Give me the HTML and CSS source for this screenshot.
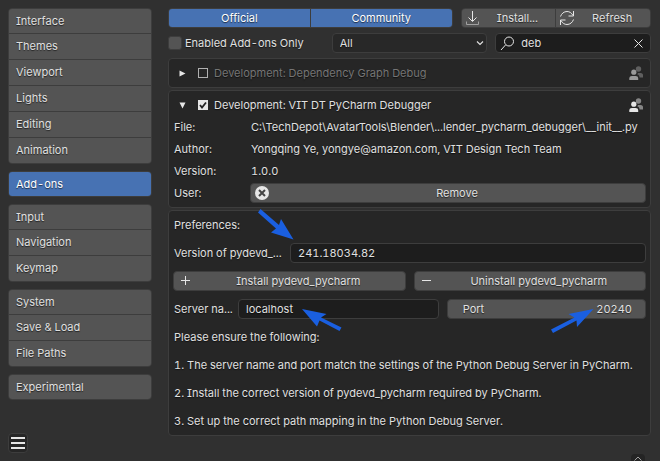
FILE: index.html
```html
<!DOCTYPE html>
<html lang="en">
<head>
<meta charset="utf-8">
<meta name="viewport" content="width=device-width, initial-scale=1">
<title>Preferences</title>
<link rel="stylesheet" href="styles.css">
</head>
<body>
<svg class="defs" aria-hidden="true">
  <symbol id="people" viewBox="0 0 15 15">
    <g class="back"><circle cx="9.500" cy="3" r="2.700"/><path d="M9 7h2.500C13.300 7 14 8 14 9.200V11.500H10.500C10.500 9.700 9.800 8.900 8.300 8.600z"/></g>
    <circle cx="4.800" cy="6.200" r="2.600"/><path d="M.3 14v-1.500C.3 10.800 1.300 10 3 10h3.500c1.700 0 2.700.8 2.700 2.500V14z"/>
  </symbol>
</svg>
<div class="window">
  <aside class="sidebar">
    <nav class="tabs">
      <div class="group">
        <button>Interface</button>
        <button>Themes</button>
        <button>Viewport</button>
        <button>Lights</button>
        <button>Editing</button>
        <button>Animation</button>
      </div>
      <div class="group active"><button aria-current="page">Add-ons</button></div>
      <div class="group">
        <button>Input</button>
        <button>Navigation</button>
        <button>Keymap</button>
      </div>
      <div class="group">
        <button>System</button>
        <button>Save &amp; Load</button>
        <button>File Paths</button>
      </div>
      <div class="group"><button>Experimental</button></div>
    </nav>
    <button class="menu" aria-label="Menu">
      <svg width="14" height="12" viewBox="0 0 14 12"><path d="M0 1h14M0 6h14M0 11h14" stroke="#e6e6e6" stroke-width="2"/></svg>
    </button>
  </aside>

  <main class="content">
    <div class="toolbar">
      <div class="segmented support">
        <button>Official</button>
        <button>Community</button>
      </div>
      <div class="segmented actions">
        <button class="with-icon"><svg width="16" height="16" viewBox="0 0 16 16"><path d="M7.500 1v10M3.500 7.500l4 4 4-4"/><path class="dim" d="M1.500 11.500v3h12v-3"/></svg>Install...</button>
        <button class="with-icon"><svg width="16" height="16" viewBox="0 0 16 16"><path d="M1.500 6.500C2.500 3.500 5 1.500 8 1.500c2.500 0 4.500 1.300 6 4M14.500 1v5h-5M14.500 9.500c-1 3-3.500 5-6.500 5-2.500 0-4.500-1.300-6-4M1.500 15v-5h5"/></svg>Refresh</button>
      </div>
    </div>

    <div class="filters">
      <label class="check"><input type="checkbox" class="box solid">Enabled Add-ons Only</label>
      <select class="category" aria-label="Category"><option>All</option></select>
      <div class="search">
        <svg width="15" height="15" viewBox="0 0 15 15"><circle cx="9" cy="5.500" r="4.500"/><path d="M5.500 9L1 14"/></svg>
        <input type="text" value="deb" aria-label="Search">
        <button aria-label="Clear"><svg width="9" height="9" viewBox="0 0 9 9"><path d="M.5.5l8 8M8.500.5l-8 8"/></svg></button>
      </div>
    </div>

    <section class="panel disabled">
      <div class="title">
        <button class="toggle" aria-label="Expand"><svg width="7" height="7" viewBox="0 0 7 7"><path d="M.5.5L6.500 3.500l-6 3z"/></svg></button>
        <label class="check"><input type="checkbox" class="box">Development: Dependency Graph Debug</label>
        <svg class="people" width="15" height="15"><use href="#people"/></svg>
      </div>
    </section>

    <section class="panel details">
      <div class="title">
        <button class="toggle" aria-label="Collapse"><svg width="7" height="7" viewBox="0 0 7 7"><path d="M.5.5h6L3.500 6.500z"/></svg></button>
        <label class="check"><input type="checkbox" class="box" checked>Development: VIT DT PyCharm Debugger</label>
        <svg class="people" width="15" height="15"><use href="#people"/></svg>
      </div>
      <div class="info"><span>File:</span><span>C:\TechDepot\AvatarTools\Blender\...lender_pycharm_debugger\__init__.py</span></div>
      <div class="info"><span>Author:</span><span>Yongqing Ye, yongye@amazon.com, VIT Design Tech Team</span></div>
      <div class="info"><span>Version:</span><span>1.0.0</span></div>
      <div class="info"><span>User:</span>
        <button class="btn with-icon"><svg width="14" height="14" viewBox="0 0 14 14"><circle cx="7" cy="7" r="7" fill="#e6e6e6" stroke="none"/><path d="M4 4l6 6M10 4l-6 6" class="cross"/></svg>Remove</button>
      </div>
    </section>

    <section class="panel prefs">
      <p>Preferences:</p>
      <div class="field version">
        <label for="version">Version of pydevd_...</label>
        <input id="version" type="text" value="241.18034.82">
        <svg class="arrow arrow-version" width="38" height="32" viewBox="0 0 38 32"><path d="M3.500 1L22 17 24 11 36.500 31.500 14 24.500 19 20.500 1 4.500z"/></svg>
      </div>
      <div class="pair">
        <button class="btn with-icon"><svg width="10" height="10" viewBox="0 0 10 10"><path d="M0 4.500h9M4.500 0v9"/></svg>Install pydevd_pycharm</button>
        <button class="btn with-icon"><svg width="10" height="10" viewBox="0 0 10 10"><path d="M0 4.500h9"/></svg>Uninstall pydevd_pycharm</button>
      </div>
      <div class="pair address">
        <div class="field server">
          <label for="server">Server na...</label>
          <input id="server" type="text" value="localhost">
          <svg class="arrow arrow-server" width="40" height="22" viewBox="0 0 40 22"><path d="M0 0L24.500 5 19 8.500 39.500 18.500 37.500 22 17.500 11.500 15 17.500z"/></svg>
        </div>
        <div class="port">
          <label for="port">Port</label>
          <input id="port" type="text" inputmode="numeric" value="20240">
          <svg class="arrow arrow-port" width="43" height="24" viewBox="0 0 43 24"><path d="M42.500 0L17.500 5 23.500 8.500 0 20.500 2 24 25.500 11.500 26 18z"/></svg>
        </div>
      </div>
      <p>Please ensure the following:</p>
      <p>1. The server name and port match the settings of the Python Debug Server in PyCharm.</p>
      <p>2. Install the correct version of pydevd_pycharm required by PyCharm.</p>
      <p>3. Set up the correct path mapping in the Python Debug Server.</p>
    </section>
  </main>
  <button class="drawer" aria-label="Show region"><svg width="8" height="5" viewBox="0 0 8 5"><path d="M.5 4.500L4 1l3.500 3.500"/></svg></button>
</div>
</body>
</html>
```
FILE: styles.css
```css
* { box-sizing: border-box; }

body {
  margin: 0;
  background: #303030;
  color: #e0e0e0;
  font: 11px/20px Inter, "Liberation Sans", sans-serif;
  font-feature-settings: "tnum", "cv08";
  text-shadow: 0 1px 1px rgba(0, 0, 0, .6);
}

button, input, select {
  font: inherit;
  font-feature-settings: inherit;
  color: inherit;
  text-shadow: inherit;
  margin: 0;
}
button { border: 0; padding: 0; background: none; }
p { margin: 0; }
svg { fill: none; stroke: #e6e6e6; flex: none; }
.defs { position: absolute; width: 0; height: 0; }

.window {
  position: relative;
  display: flex;
  gap: 16px;
  min-height: 100vh;
  padding: 8px 9px 8px 8px;
  overflow: hidden;
}

/* Sidebar */
.sidebar {
  display: flex;
  flex-direction: column;
  justify-content: space-between;
  align-items: flex-start;
  flex: 0 0 144px;
}
.tabs { display: flex; flex-direction: column; gap: 7px; width: 100%; }
.group {
  display: flex;
  flex-direction: column;
  gap: 1px;
  overflow: hidden;
  border: 1px solid #3d3d3d;
  border-radius: 4px;
  background: #3d3d3d;
}
.group button {
  height: 25px;
  padding: 0 0 2px 7px;
  background: #545454;
  text-align: left;
}
.group button:first-child { height: 24px; padding-bottom: 0; }
.group.active button { background: #4772b3; color: #fff; }
.menu {
  display: grid;
  place-items: center;
  width: 20px;
  height: 20px;
  border: 1px solid #3d3d3d;
  border-radius: 4px;
  background: #262626;
}

/* Main column */
.content { flex: 1; min-width: 0; }
.toolbar, .filters { gap: 8px; margin-bottom: 5px; }
.toolbar { display: flex; }
.filters { display: grid; grid-template-columns: repeat(3, minmax(0, 1fr)); }
.segmented {
  display: flex;
  gap: 1px;
  overflow: hidden;
  height: 20px;
  border: 1px solid #3d3d3d;
  border-radius: 4px;
  background: #3d3d3d;
}
.segmented button { flex: 1; line-height: 18px; background: #545454; }
.support { flex: 3; }
.actions { flex: 2; }
.support button { background: #4772b3; color: #fff; }

.with-icon { position: relative; padding-left: 18px; }
.with-icon svg { position: absolute; left: 3px; top: 50%; transform: translateY(-50%); }
.dim { stroke: #a0a0a0; }

.check { display: flex; align-items: center; white-space: nowrap; }
.box {
  appearance: none;
  flex: none;
  width: 10px;
  height: 10px;
  margin-right: 6px;
  border: 1px solid #b0b0b0;
}
.box:checked {
  border: 0;
  background: #e6e6e6 url("data:image/svg+xml,%3Csvg xmlns='http://www.w3.org/2000/svg' viewBox='0 0 10 10'%3E%3Cpath d='M2 5l2 2.500L8 2.500' fill='none' stroke='%23222' stroke-width='1.800'/%3E%3C/svg%3E");
}
.box.solid {
  width: 14px;
  height: 14px;
  margin-right: 3px;
  border: 1px solid #3d3d3d;
  border-radius: 3px;
  background: #545454;
}
.category {
  appearance: none;
  height: 20px;
  padding: 0 7px;
  border: 1px solid #3d3d3d;
  border-radius: 4px;
  line-height: 18px;
  background: #282828 url("data:image/svg+xml,%3Csvg xmlns='http://www.w3.org/2000/svg' width='8' height='5'%3E%3Cpath d='M1 .5l3 3 3-3' fill='none' stroke='%23e0e0e0' stroke-width='1.200'/%3E%3C/svg%3E") no-repeat right 2px center;
}
.search {
  display: flex;
  align-items: center;
  height: 20px;
  padding: 0 7px 0 4px;
  border: 1px solid #3d3d3d;
  border-radius: 4px;
  background: #1d1d1d;
}
.search input {
  flex: 1;
  min-width: 0;
  height: 18px;
  padding: 0 6px;
  border: 0;
  background: none;
}
.search button { display: grid; }

/* Panels */
.panel {
  display: flex;
  flex-direction: column;
  gap: 2px;
  margin-bottom: 2px;
  padding: 4px;
  border: 1px solid #3d3d3d;
  border-radius: 4px;
  background: #262626;
}
.prefs { gap: 8px; margin: 0; }
.panel p, .panel span, .field label { padding-left: 1px; white-space: nowrap; }
.title { display: flex; align-items: center; height: 20px; padding: 0 2px 0 6px; }
.toggle { display: grid; margin-right: 12px; }
.toggle svg { fill: #e6e6e6; stroke: none; }
.people { margin-left: auto; fill: #e6e6e6; stroke: none; }
.back { opacity: .5; }
.disabled .check { color: #757575; }
.disabled .people { fill: #999; }

.info { display: grid; grid-template-columns: 77px 1fr; }
.btn {
  height: 20px;
  border: 1px solid #3d3d3d;
  border-radius: 4px;
  line-height: 18px;
  background: #545454;
}
.info svg { left: 4px; }
.cross { stroke: #444; stroke-width: 2; }
.pair { display: grid; grid-template-columns: repeat(2, minmax(0, 1fr)); gap: 8px; }
.pair.address { grid-template-columns: minmax(0, 4fr) minmax(0, 3fr); }
.pair .btn svg { left: 7px; }

.field { position: relative; display: grid; }
.field input {
  min-width: 0;
  height: 20px;
  padding: 0 7px;
  border: 1px solid #3d3d3d;
  border-radius: 4px;
  background: #1d1d1d;
}
.version { grid-template-columns: 117px 1fr; }
.server { grid-template-columns: 65px 1fr; }
.port {
  position: relative;
  display: flex;
  height: 20px;
  padding: 0 13px 0 15px;
  border: 1px solid #3d3d3d;
  border-radius: 4px;
  line-height: 18px;
  background: #545454;
}
.port input {
  flex: 1;
  min-width: 0;
  padding: 0;
  border: 0;
  background: none;
  text-align: right;
}

/* Pointers laid over the fields */
.arrow { position: absolute; fill: #1a5fe0; stroke: none; }
.arrow-version { left: 84px; top: -35px; }
.arrow-server { left: 129px; top: 10px; }
.arrow-port { right: 51px; top: 9px; }

.drawer {
  position: absolute;
  right: 15px;
  bottom: -1px;
  display: grid;
  place-items: center;
  width: 14px;
  height: 8px;
  border-radius: 4px 4px 0 0;
  background: #242424;
}
.drawer svg { stroke: #a0a0a0; }
```
